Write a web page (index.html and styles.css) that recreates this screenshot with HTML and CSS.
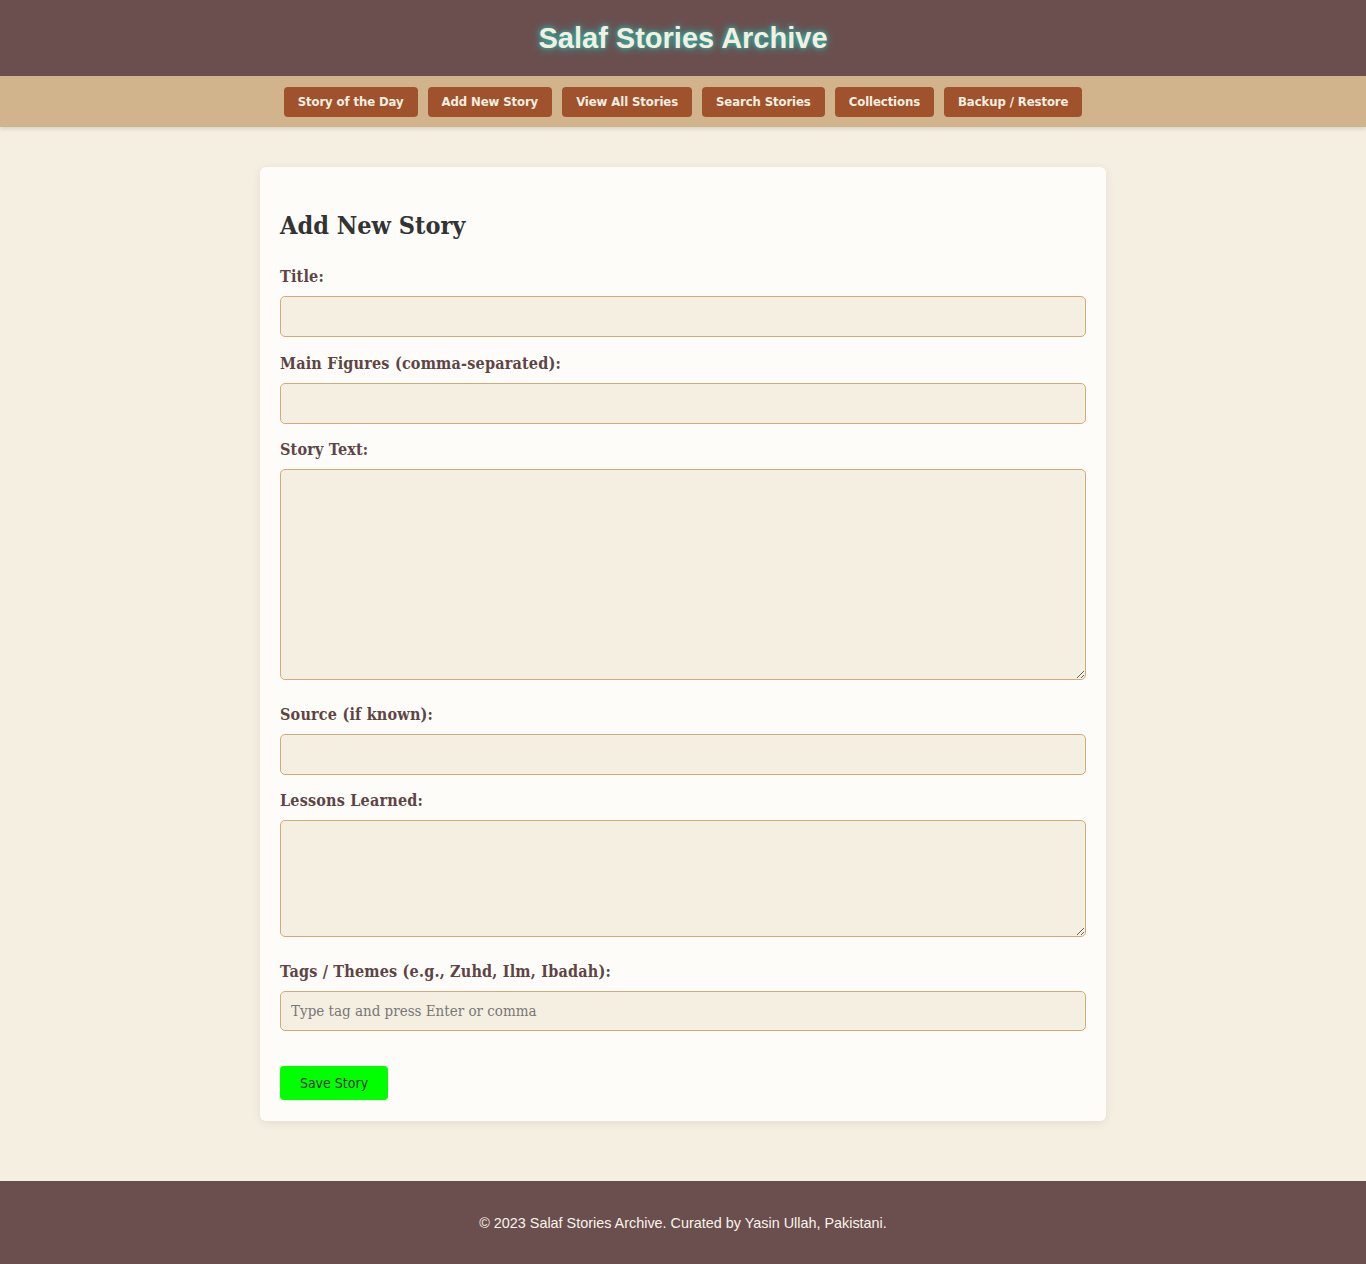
FILE: index.html
```html
<!DOCTYPE html>
<html lang="en">
<head>
<meta charset="utf-8">
<title>Salaf Stories Archive</title>
<link rel="stylesheet" href="styles.css">
</head>
<body>
<header class="site-header">
  <h1 class="site-title">Salaf Stories Archive</h1>
</header>
<nav class="site-nav">
  <button class="nav-btn">Story of the Day</button>
  <button class="nav-btn">Add New Story</button>
  <button class="nav-btn">View All Stories</button>
  <button class="nav-btn">Search Stories</button>
  <button class="nav-btn">Collections</button>
  <button class="nav-btn">Backup / Restore</button>
</nav>
<main class="main">
  <section class="card">
    <h2 class="card-title">Add New Story</h2>
    <form class="story-form">
      <div class="field">
        <label class="label">Title:</label>
        <input class="input" type="text">
      </div>
      <div class="field">
        <label class="label">Main Figures (comma-separated):</label>
        <input class="input" type="text">
      </div>
      <div class="field field-area">
        <label class="label">Story Text:</label>
        <textarea class="input textarea-lg"></textarea>
      </div>
      <div class="field">
        <label class="label">Source (if known):</label>
        <input class="input" type="text">
      </div>
      <div class="field field-area">
        <label class="label">Lessons Learned:</label>
        <textarea class="input textarea-sm"></textarea>
      </div>
      <div class="field">
        <label class="label">Tags / Themes (e.g., Zuhd, Ilm, Ibadah):</label>
        <input class="input input-tag" type="text" placeholder="Type tag and press Enter or comma">
      </div>
      <button type="button" class="save-btn">Save Story</button>
    </form>
  </section>
</main>
<footer class="site-footer">
  <p>© 2023 Salaf Stories Archive. Curated by Yasin Ullah, Pakistani.</p>
</footer>
</body>
</html>
```
FILE: styles.css
```css
* { box-sizing: border-box; }
html, body { margin: 0; padding: 0; }
body {
  background: #f5efe2;
  font-family: "DejaVu Serif", Georgia, serif;
  color: #333;
}
.site-header {
  background: #6b4f4f;
  height: 76px;
  display: flex;
  align-items: center;
  justify-content: center;
}
.site-title {
  margin: 0;
  font-family: "Liberation Sans", Arial, sans-serif;
  font-weight: bold;
  font-size: 29px;
  color: #f5efe0;
  text-shadow: 0 0 8px #33b8ad, 0 0 4px #2aa79c;
}
.site-nav {
  background: #d2b48c;
  height: 51px;
  display: flex;
  justify-content: center;
  align-items: center;
  gap: 10px;
  box-shadow: 0 2px 4px rgba(0,0,0,0.12);
}
.nav-btn {
  background: #a0522d;
  color: #f5efe0;
  border: none;
  border-radius: 4px;
  height: 30px;
  padding: 0 14px;
  font-family: "DejaVu Sans Condensed", "DejaVu Sans", sans-serif;
  font-weight: bold;
  font-size: 13px;
  font-stretch: condensed;
  letter-spacing: -0.1px;
}
.main {
  padding: 40px 0 60px;
  display: flex;
  justify-content: center;
}
.card {
  width: 846px;
  background: #fdfcf9;
  border-radius: 6px;
  box-shadow: 0 2px 10px rgba(0,0,0,0.08);
  padding: 20px 20px 21px;
}
.card-title {
  margin: 24px 0 26px;
  font-family: "DejaVu Serif Condensed", "DejaVu Serif", serif;
  font-stretch: condensed;
  font-size: 25px;
  line-height: 30px;
  font-weight: bold;
  color: #333;
}
.story-form {
  display: flex;
  flex-direction: column;
}
.field {
  display: flex;
  flex-direction: column;
  margin-bottom: 16.5px;
}
.field-area { margin-bottom: 24.5px; }
.label {
  font-weight: bold;
  font-size: 16px;
  color: #5d4545;
  margin-bottom: 9px;
  line-height: 20px;
  font-stretch: condensed;
  letter-spacing: 0.2px;
  font-family: "DejaVu Serif Condensed", "DejaVu Serif", serif;
}
.input {
  width: 100%;
  height: 41px;
  background: #f5efe2;
  border: 1px solid #d2ab78;
  border-radius: 5px;
  padding: 8px 10px;
  font-family: "DejaVu Serif Condensed", "DejaVu Serif", serif;
  font-stretch: condensed;
  font-size: 15px;
  color: #333;
}
.input-tag { height: 40px; }
.input::placeholder { color: #777; }
.textarea-lg { height: 211px; resize: vertical; }
.textarea-sm { height: 117px; resize: vertical; }
.save-btn {
  align-self: flex-start;
  margin-top: 18.5px;
  width: 108px;
  height: 34px;
  background: #00ff00;
  color: #333;
  border: none;
  border-radius: 4px;
  font-family: "DejaVu Sans Condensed", "DejaVu Sans", sans-serif;
  font-size: 14px;
  font-stretch: condensed;
}
.site-footer {
  background: #6b4f4f;
  height: 84px;
  display: flex;
  align-items: center;
  justify-content: center;
}
.site-footer p {
  margin: 0;
  font-family: "Liberation Sans", Arial, sans-serif;
  font-size: 14.4px;
  color: #f8f4ea;
}
```
